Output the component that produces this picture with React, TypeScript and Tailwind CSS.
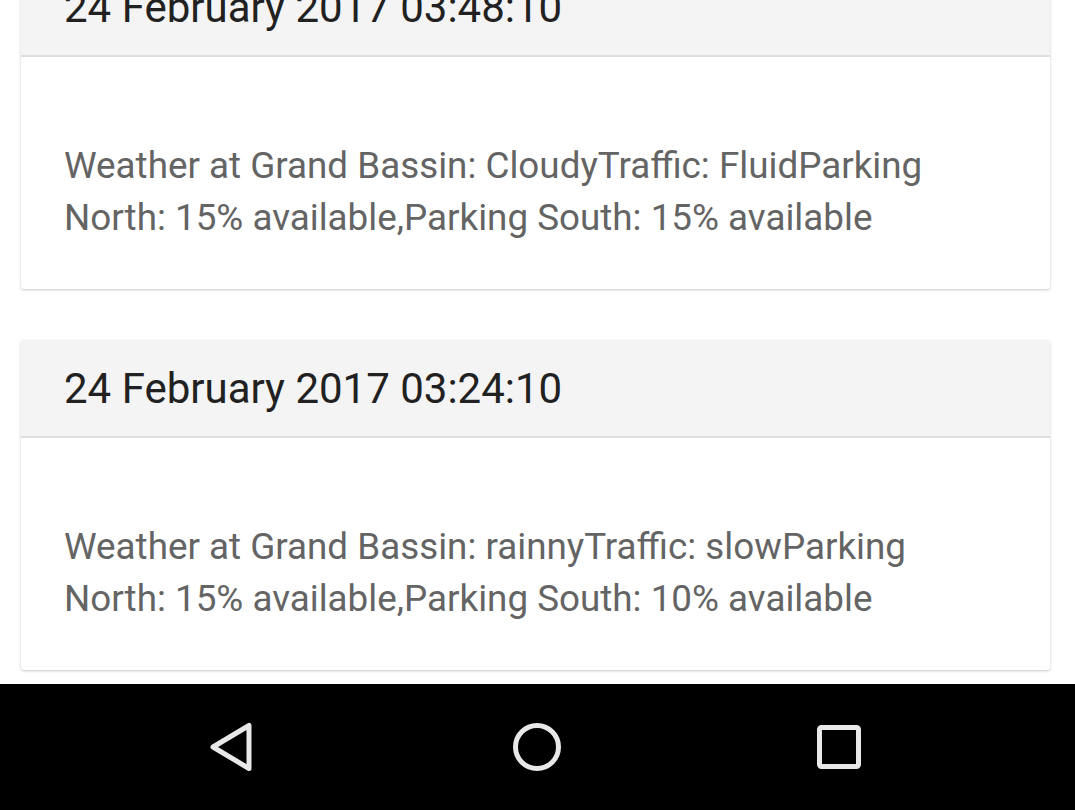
import React from 'react';

type Entry = { time: string; text: string };

const entries: Entry[] = [
  {
    time: '24 February 2017 03:48:10',
    text: 'Weather at Grand Bassin: CloudyTraffic: FluidParking North: 15% available,Parking South: 15% available',
  },
  {
    time: '24 February 2017 03:24:10',
    text: 'Weather at Grand Bassin: rainnyTraffic: slowParking North: 15% available,Parking South: 10% available',
  },
];

const Card: React.FC<{ entry: Entry }> = ({ entry }) => (
  <div className="ml-[21px] mr-[25px] rounded-[3px] bg-white shadow-[0_1px_3px_rgba(0,0,0,0.22)]">
    <div className="flex h-[98px] items-center rounded-t-[3px] border-b-2 border-[#dedede] bg-[#f4f4f4] pl-[43px] text-[42px] text-[#212121]">
      {entry.time}
    </div>
    <div className="pb-[45px] pl-[43px] pr-[60px] pt-[83px] text-[36.8px] leading-[52px] text-[#646464]">
      {entry.text}
    </div>
  </div>
);

const NavBar: React.FC = () => (
  <div className="flex h-[126px] items-center justify-around bg-black px-[120px]">
    <svg width="56" height="56" viewBox="0 0 56 56" className="translate-x-[-27px]">
      <path d="M45 6.5 L45 49.5 L9 28 Z" fill="none" stroke="#e8e8e8" strokeWidth="5" strokeLinejoin="round" />
    </svg>
    <svg width="56" height="56" viewBox="0 0 56 56">
      <circle cx="28" cy="28" r="21.5" fill="none" stroke="#e8e8e8" strokeWidth="5" />
    </svg>
    <svg width="56" height="56" viewBox="0 0 56 56" className="translate-x-[23px]">
      <rect x="8.5" y="8.5" width="39" height="39" rx="2" fill="none" stroke="#e8e8e8" strokeWidth="5" />
    </svg>
  </div>
);

export default function App() {
  return (
    <div className="flex h-[810px] w-[1075px] flex-col overflow-hidden bg-white font-['Roboto',sans-serif]">
      <div className="h-[684px] overflow-hidden">
        <div className="-mt-[41px] flex flex-col gap-[51px]">
          {entries.map((e) => (
            <Card key={e.time} entry={e} />
          ))}
        </div>
      </div>
      <NavBar />
    </div>
  );
}
